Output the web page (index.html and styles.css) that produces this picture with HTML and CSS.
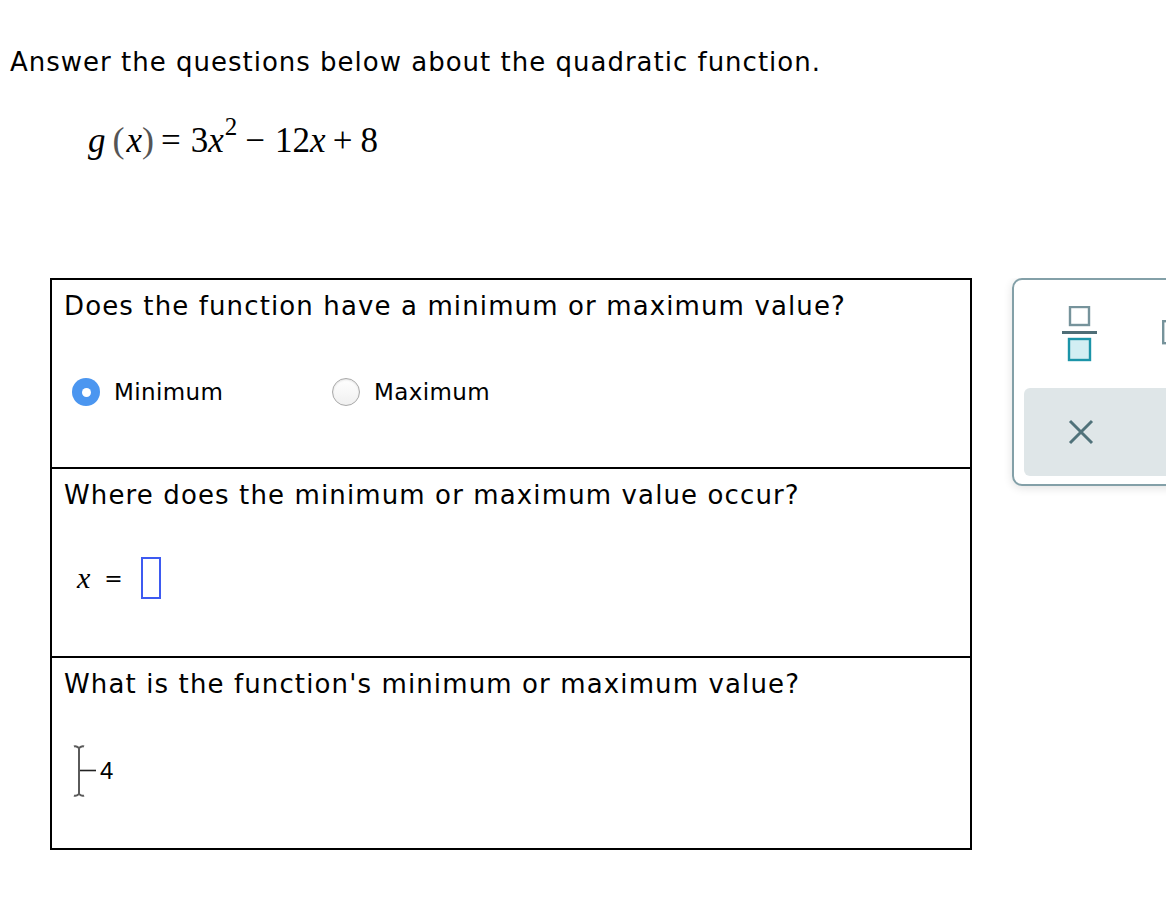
FILE: index.html
```html
<!DOCTYPE html>
<html>
<head>
<meta charset="utf-8">
<link rel="stylesheet" href="styles.css">
</head>
<body>
<div class="page">
  <p class="title">Answer the questions below about the quadratic function.</p>
  <div class="equation"><span class="it g">g</span><span class="paren lp">(</span><span class="it">x</span><span class="paren">)</span><span class="op eqs">=</span>3<span class="it">x</span><sup>2</sup><span class="op minus">−</span>12<span class="it">x</span><span class="op plus">+</span>8</div>
  <div class="work">
    <div class="qbox">
      <div class="row">
        <div class="q">Does the function have a minimum or maximum value?</div>
        <div class="choices">
          <div class="choice"><span class="radio on"></span><span class="label">Minimum</span></div>
          <div class="choice"><span class="radio"></span><span class="label">Maximum</span></div>
        </div>
      </div>
      <div class="row">
        <div class="q">Where does the minimum or maximum value occur?</div>
        <div class="answer">
          <span class="var">x</span><span class="eq">=</span><span class="input"></span>
        </div>
      </div>
      <div class="row last">
        <div class="q">What is the function's minimum or maximum value?</div>
        <div class="answer typed">
          <svg class="ibeam" width="26" height="52" viewBox="0 0 26 52"><path d="M2 1.5 Q4 0.5 7 3 Q10 0.5 12 1.5 M7 3 V49 M2 50.5 Q4 51.5 7 49 Q10 51.5 12 50.5" stroke="#5a5a5a" stroke-width="2" fill="none"/><path d="M8 25.5 H24" stroke="#222" stroke-width="1.6"/></svg><span class="val">4</span>
        </div>
      </div>
    </div>
    <div class="panel">
      <div class="tools">
        <svg class="frac" width="36" height="56" viewBox="0 0 36 56"><rect x="8" y="1" width="19" height="18" fill="none" stroke="#76939b" stroke-width="2.4"/><rect x="0" y="25" width="35" height="3" fill="#4f6e77"/><rect x="7" y="33" width="21" height="21" fill="#d2eef3" stroke="#1b94a8" stroke-width="2.4"/></svg>
        <svg class="more" width="8" height="26" viewBox="0 0 8 26"><rect x="1.2" y="1.2" width="20" height="22" fill="none" stroke="#76939b" stroke-width="2.4"/></svg>
      </div>
      <div class="del">
        <svg width="26" height="26" viewBox="0 0 26 26"><path d="M2 2 L24 24 M24 2 L2 24" stroke="#50727a" stroke-width="3" fill="none"/></svg>
      </div>
    </div>
  </div>
</div>
</body>
</html>
```
FILE: styles.css
```css
html, body {
  margin: 0;
  padding: 0;
  background: #fff;
  overflow: hidden;
  width: 1166px;
  height: 916px;
}
.page {
  width: 1166px;
  height: 916px;
  overflow: hidden;
  font-family: Verdana, "DejaVu Sans", sans-serif;
  color: #000;
}
.title {
  margin: 0;
  padding: 45px 0 0 10px;
  font-size: 26px;
  line-height: 34px;
  letter-spacing: 1px;
}
.equation {
  margin: 39px 0 0 88px;
  font-family: "Liberation Serif", "Times New Roman", serif;
  font-size: 35px;
  line-height: 44px;
  height: 44px;
}
.equation .it { font-style: italic; }
.equation .paren { color: #555; font-size: 36px; }
.equation .lp { margin-left: 7px; margin-right: 2px; }
.equation .eqs { margin: 0 10px 0 7px; }
.equation .minus { margin: 0 10px 0 8px; }
.equation .plus { margin: 0 8px 0 7px; }
.equation sup {
  font-size: 25px;
  line-height: 0;
  position: relative;
  top: -4px;
  margin-left: 1px;
}
.work {
  display: flex;
  align-items: flex-start;
  margin-top: 116px;
  width: 1166px;
  overflow: hidden;
  padding-bottom: 12px;
}
.qbox {
  margin-left: 50px;
  width: 918px;
  border: 2px solid #000;
  flex-shrink: 0;
}
.row {
  height: 189px;
  border-bottom: 2px solid #000;
  box-sizing: border-box;
  padding: 9px 0 0 12px;
}
.row.last { border-bottom: none; height: 190px; }
.q {
  font-size: 26px;
  line-height: 34px;
  letter-spacing: 1.12px;
}
.choices {
  display: flex;
  margin: 55px 0 0 8px;
}
.choice {
  display: flex;
  align-items: center;
  width: 260px;
}
.radio {
  width: 28px;
  height: 28px;
  border-radius: 50%;
  box-sizing: border-box;
  border: 1px solid #a9a9a9;
  background: linear-gradient(#fff, #f0f0f0);
  box-shadow: inset 0 1px 2px rgba(0,0,0,0.12);
  margin-right: 14px;
  position: relative;
  flex-shrink: 0;
}
.radio.on {
  border: none;
  background: #4b96f0;
  box-shadow: none;
}
.radio.on::after {
  content: "";
  position: absolute;
  left: 9.5px;
  top: 9.5px;
  width: 9px;
  height: 9px;
  border-radius: 50%;
  background: #fff;
}
.label {
  font-size: 23px;
  letter-spacing: 0.4px;
}
.answer {
  display: flex;
  align-items: center;
  margin: 45px 0 0 13px;
}
.var {
  font-family: "Liberation Serif", serif;
  font-style: italic;
  font-size: 30px;
}
.eq {
  font-size: 22px;
  margin: 0 18px 0 14px;
}
.input {
  width: 16px;
  height: 38px;
  border: 2px solid #3d5af1;
}
.typed {
  margin: 44px 0 0 8px;
  align-items: flex-start;
}
.ibeam { display: block; }
.val {
  font-family: Arial, "Liberation Sans", sans-serif;
  font-size: 24px;
  margin: 12px 0 0 2px;
  line-height: 28px;
}
.panel {
  margin-left: 40px;
  width: 300px;
  height: 208px;
  box-sizing: border-box;
  border: 2px solid #83a0a8;
  border-radius: 10px;
  box-shadow: 0 2px 10px rgba(0,0,0,0.12);
  padding: 26px 0 0 10px;
  flex-shrink: 0;
}
.tools {
  display: flex;
  align-items: flex-start;
  height: 82px;
}
.frac { margin-left: 38px; }
.more { margin: 14px 0 0 64px; }
.del {
  height: 88px;
  background: #dfe6e8;
  border-radius: 6px;
  display: flex;
  align-items: center;
  padding-left: 44px;
}
.del svg { display: block; }
```
